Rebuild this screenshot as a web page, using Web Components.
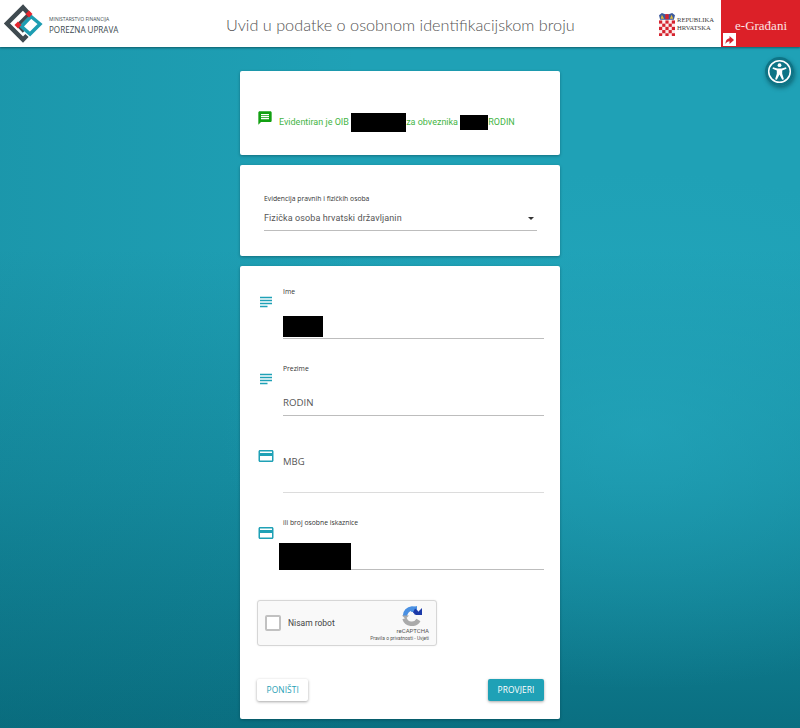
<!DOCTYPE html>
<html lang="hr">
<head>
<meta charset="utf-8">
<title>Uvid u podatke o osobnom identifikacijskom broju</title>
<style>
  html, body { margin: 0; padding: 0; }
  body {
    min-height: 728px;
    font-family: Roboto, "Liberation Sans", sans-serif;
    background:
      radial-gradient(ellipse 420px 260px at 640px 430px, rgba(38,170,192,.6), rgba(38,170,192,0) 100%),
      linear-gradient(90deg, rgba(6,90,105,.14), rgba(6,90,105,0) 45%),
      linear-gradient(180deg, #1fa1b6 0, #1fa1b6 250px, #168da1 480px, #0a6f81 728px);
  }
</style>
</head>
<body>
<app-header></app-header>
<a11y-button></a11y-button>
<main-column>
  <form-card variant="message">
    <status-line>Evidentiran je OIB <redact-box w="55" h="19"></redact-box>za obveznika <redact-box w="28" h="15"></redact-box>RODIN</status-line>
  </form-card>
  <form-card variant="select">
    <select-field label="Evidencija pravnih i fizičkih osoba">Fizička osoba hrvatski državljanin</select-field>
  </form-card>
  <form-card variant="form">
    <form-field label="Ime" icon="notes"><redact-box w="40" h="21" style="margin-bottom:-4px"></redact-box></form-field>
    <form-field label="Prezime" icon="notes">RODIN</form-field>
    <form-field label="MBG" icon="card" empty></form-field>
    <form-field label="ili broj osobne iskaznice" icon="card"><redact-box w="72" h="27" style="margin:0 0 -6px -4px"></redact-box></form-field>
    <recaptcha-box></recaptcha-box>
    <div slot="actions" style="display:flex;justify-content:space-between;margin:33px 0 0 1px">
      <app-button>PONIŠTI</app-button>
      <app-button primary>PROVJERI</app-button>
    </div>
  </form-card>
</main-column>

<script>
const ICONS = {
  notes: "M14 17H4v2h10v-2zm6-8H4v2h16V9zM4 15h16v-2H4v2zM4 5v2h16V5H4z",
  card: "M20 4H4c-1.11 0-1.99.89-1.99 2L2 18c0 1.11.89 2 2 2h16c1.11 0 2-.89 2-2V6c0-1.11-.89-2-2-2zm0 14H4v-6h16v6zm0-10H4V6h16v2z",
  message: "M20 2H4c-1.1 0-1.99.9-1.99 2L2 22l4-4h14c1.1 0 2-.9 2-2V4c0-1.1-.9-2-2-2zm-2 12H6v-2h12v2zm0-3H6V9h12v2zm0-3H6V6h12v2z"
};

class AppHeader extends HTMLElement {
  constructor() {
    super();
    this.attachShadow({ mode: "open" });
    // checkerboard of the coat of arms
    let squares = "";
    for (let r = 0; r < 5; r++) {
      for (let c = 0; c < 5; c++) {
        if ((r + c) % 2 === 0) squares += `<rect x="${c * 2.8}" y="${6.5 + r * 2.8}" width="2.8" height="2.8" fill="#d5232f"/>`;
      }
    }
    this.shadowRoot.innerHTML = `
      <style>
        :host {
          display: flex;
          height: 47px;
          background: #fff;
          box-shadow: 0 1px 2px rgba(0, 40, 50, .55);
          position: relative;
        }
        .brand { display: flex; align-items: center; width: 226px; flex: none; }
        .brand svg { flex: none; }
        .brand-text { display: flex; flex-direction: column; margin: 3px 0 0 1px; font-family: "Open Sans", sans-serif; color: #3c4a50; white-space: nowrap; }
        .ministry { font-size: 5px; line-height: 9px; }
        .office { font-size: 8.100px; line-height: 11px; }
        h1 {
          flex: 1;
          margin: 0;
          font: 300 16.250px/49px Lato, sans-serif;
          color: #555;
          white-space: nowrap;
        }
        .gov { display: flex; align-items: center; gap: 2px; width: 62px; flex: none; }
        .gov svg { margin-top: 1px; }
        .gov-text { font: 6.600px/8px "Liberation Serif", serif; color: #3a3a3a; }
        .citizen {
          position: relative;
          width: 79px;
          flex: none;
          background: #dc2028;
          color: #fbe3e3;
          font: 13px/51px "Liberation Serif", serif;
          text-align: right;
          padding-right: 13px;
          box-sizing: border-box;
        }
        .citizen svg { position: absolute; left: 2px; bottom: 1px; }
      </style>
      <div class="brand">
        <svg width="48" height="47" viewBox="0 0 48 47">
          <path d="M29 14 23 7.500 7 23.500 23 39.500 27 35.500" fill="none" stroke="#3f4a50" stroke-width="4.500"/>
          <path d="M29 14 18 25 24 31.500" fill="none" stroke="#3f4a50" stroke-width="3.500"/>
          <path d="M31 16.500 40 24 30 34 21.500 26.500z" fill="none" stroke="#1d9db2" stroke-width="3.500"/>
          <rect x="26.500" y="11.500" width="5" height="5" fill="#e5262f" transform="rotate(45 29 14)"/>
          <rect x="15.500" y="22.500" width="5" height="5" fill="#e5262f" transform="rotate(45 18 25)"/>
        </svg>
        <div class="brand-text"><span class="ministry">MINISTARSTVO FINANCIJA</span><span class="office">POREZNA UPRAVA</span></div>
      </div>
      <h1>Uvid u podatke o osobnom identifikacijskom broju</h1>
      <div class="gov">
        <svg width="16" height="23" viewBox="0 0 14 20.100" preserveAspectRatio="none">
          <path d="M0 2 2.500 0 5.500 1 8.500 1 11.500 0 14 2 13 6H1z" fill="#3d5a9e"/>
          <path d="M2.500 1.500 4.500 5H1.500zM11 1.500 12.500 5H9.500z" fill="#e0b93c"/>
          <path d="M5.500 1 8.500 1 8.500 5.500H5.500z" fill="#d5232f"/>
          <path d="M0 6.500H14V17C14 18.500 10.500 19.500 7 20.100 3.500 19.500 0 18.500 0 17z" fill="#fbecec"/>
          ${squares}
        </svg>
        <div class="gov-text">REPUBLIKA<br>HRVATSKA</div>
      </div>
      <div class="citizen">e-Građani
        <svg width="13" height="13" viewBox="0 0 13 13">
          <rect width="13" height="13" fill="#fff"/>
          <path d="M2.500 11C2.500 7 4.500 5.500 6.500 5.200V3L11 7 6.500 11V8.200C5 8.200 3.500 9 2.500 11z" fill="#d5232f"/>
        </svg>
      </div>
    `;
  }
}

class A11yButton extends HTMLElement {
  constructor() {
    super();
    this.attachShadow({ mode: "open" });
    this.shadowRoot.innerHTML = `
      <style>
        :host {
          position: absolute;
          left: 765px;
          top: 57px;
          width: 29px;
          height: 29px;
          border-radius: 50%;
          box-shadow: 1px 2px 4px rgba(0, 50, 60, .5);
        }
        svg { display: block; }
      </style>
      <svg width="29" height="29" viewBox="0 0 29 29">
        <circle cx="14.500" cy="14.500" r="14.500" fill="#0e7486"/>
        <circle cx="14.500" cy="14.500" r="10.800" fill="#0e7486" stroke="#fff" stroke-width="1.500"/>
        <circle cx="14.500" cy="8.200" r="1.900" fill="#fff"/>
        <path d="M8 10.300 12.300 11.600H16.700L21 10.300 21.500 11.800 17.200 13.600V16.800L18.900 22.200 17.200 22.800 14.500 17.600 11.800 22.800 10.100 22.200 11.800 16.800V13.600L7.500 11.800z" fill="#fff"/>
      </svg>
    `;
  }
}

class MainColumn extends HTMLElement {
  constructor() {
    super();
    this.attachShadow({ mode: "open" });
    this.shadowRoot.innerHTML = `
      <style>
        :host {
          display: flex;
          flex-direction: column;
          align-items: center;
          gap: 10px;
          padding: 24px 0 9px;
        }
      </style>
      <slot></slot>
    `;
  }
}

class FormCard extends HTMLElement {
  constructor() {
    super();
    this.attachShadow({ mode: "open" });
    this.shadowRoot.innerHTML = `
      <style>
        :host {
          display: block;
          box-sizing: border-box;
          width: 320px;
          background: #fff;
          border-radius: 2px;
          box-shadow: 0 1px 3px rgba(0, 40, 50, .4);
        }
        :host([variant="message"]) { height: 84px; padding: 39px 16px 0 17px; }
        :host([variant="select"]) { height: 91px; padding: 29px 23px 0 24px; }
        :host([variant="form"]) { height: 453px; padding: 19px 16px 18px; }
        .stack { display: flex; flex-direction: column; gap: 23px; }
      </style>
      <div class="stack"><slot></slot></div>
      <slot name="actions"></slot>
    `;
  }
}

class StatusLine extends HTMLElement {
  constructor() {
    super();
    this.attachShadow({ mode: "open" });
    this.shadowRoot.innerHTML = `
      <style>
        :host {
          display: flex;
          align-items: flex-start;
          gap: 6px;
          color: #45b545;
          font: 9px/19px Roboto, sans-serif;
          white-space: nowrap;
        }
        svg { flex: none; fill: #12a012; }
        .text { margin-top: 3px; }
      </style>
      <svg width="16" height="16" viewBox="0 0 24 24"><path d="${ICONS.message}"/></svg>
      <span class="text"><slot></slot></span>
    `;
  }
}

class RedactBox extends HTMLElement {
  constructor() {
    super();
    this.attachShadow({ mode: "open" });
    this.shadowRoot.innerHTML = `
      <style>
        :host {
          display: inline-block;
          vertical-align: middle;
          background: #000;
          width: ${this.getAttribute("w") || 40}px;
          height: ${this.getAttribute("h") || 20}px;
        }
      </style>
    `;
  }
}

class SelectField extends HTMLElement {
  constructor() {
    super();
    this.attachShadow({ mode: "open" });
    this.shadowRoot.innerHTML = `
      <style>
        :host { display: block; border-bottom: 1px solid #bdbdbd; height: 36px; color: #555; }
        .label { font: 6.800px/10px "Open Sans", sans-serif; color: #333; }
        .value { display: flex; justify-content: space-between; align-items: center; margin-top: 7px; font: 9px/14px Roboto, sans-serif; letter-spacing: .1px; }
        .caret { width: 0; height: 0; border: 3.500px solid transparent; border-top: 3.500px solid #333; border-bottom: 0; margin-right: 3px; }
      </style>
      <div class="label">${this.getAttribute("label")}</div>
      <div class="value"><span><slot></slot></span><span class="caret"></span></div>
    `;
  }
}

class FormField extends HTMLElement {
  constructor() {
    super();
    this.attachShadow({ mode: "open" });
    this.shadowRoot.innerHTML = `
      <style>
        :host { display: grid; grid-template-columns: 27px 1fr; height: 54px; color: #555; }
        svg { fill: #1fa1b6; margin: 8px 0 0 1px; }
        .body { display: flex; flex-direction: column; border-bottom: 1px solid #bdbdbd; }
        .label { font: 6.800px/12px "Open Sans", sans-serif; margin-top: 1px; color: #333; }
        :host([empty]) .label { font: 9.500px/12px "Open Sans", sans-serif; margin-top: 0; padding-top: 17px; color: #555; }
        :host([empty]) .body { border-bottom-color: #dcdcdc; }
        .value { display: flex; align-items: flex-end; margin-top: auto; padding-bottom: 5px; font: 9.700px/14px "Open Sans", sans-serif; }
      </style>
      <svg width="18" height="18" viewBox="0 0 24 24"><path d="${ICONS[this.getAttribute("icon")]}"/></svg>
      <div class="body">
        <div class="label">${this.getAttribute("label")}</div>
        <div class="value"><slot></slot></div>
      </div>
    `;
  }
}

class RecaptchaBox extends HTMLElement {
  constructor() {
    super();
    this.attachShadow({ mode: "open" });
    this.shadowRoot.innerHTML = `
      <style>
        :host {
          display: flex;
          align-items: center;
          box-sizing: border-box;
          width: 180px;
          height: 46px;
          margin: 7px 0 0 1px;
          padding: 0 7px;
          background: #f9f9f9;
          border: 1px solid #d6d6d6;
          border-radius: 3px;
          box-shadow: 0 0 2px rgba(0, 0, 0, .08);
          font-family: Roboto, sans-serif;
          color: #444;
        }
        .check { width: 16px; height: 16px; box-sizing: border-box; background: #fff; border: 2px solid #c1c1c1; border-radius: 2px; flex: none; }
        .label { margin-left: 7px; font-size: 8.500px; flex: 1; }
        .side { display: flex; flex-direction: column; align-items: flex-end; margin-top: 2px; }
        .side svg { margin: 0 7px 1px 0; }
        .name { font-size: 6px; line-height: 8px; color: #555; }
        .legal { font-size: 4.900px; line-height: 7px; color: #555; white-space: nowrap; }
      </style>
      <span class="check"></span>
      <span class="label">Nisam robot</span>
      <div class="side">
        <svg width="20" height="20" viewBox="0 0 20 20">
          <path d="M2.500 12.500A7.700 7.700 0 0 0 16.500 14" fill="none" stroke="#aaa" stroke-width="4.500"/>
          <path d="M3 10A7.500 7.500 0 0 1 10 2.500 7.500 7.500 0 0 1 13 3.100" fill="none" stroke="#4a90e2" stroke-width="4.500"/>
          <path d="M0 9.500H7L3.500 13z" fill="#aaa"/>
          <path d="M11 1 15 0V6L9 6z" fill="#4a90e2"/>
          <path d="M12 4.500A6 6 0 0 1 15 8" fill="none" stroke="#1c3aa9" stroke-width="4.500"/>
          <path d="M13 9H20V2z" fill="#1c3aa9"/>
        </svg>
        <span class="name">reCAPTCHA</span>
        <span class="legal">Pravila o privatnosti - Uvjeti</span>
      </div>
    `;
  }
}

class AppButton extends HTMLElement {
  constructor() {
    super();
    this.attachShadow({ mode: "open" });
    this.shadowRoot.innerHTML = `
      <style>
        :host {
          display: block;
          height: 22px;
          padding: 0 9.500px;
          background: #fff;
          color: #1fa1b6;
          font: 8.400px/22px "Open Sans", sans-serif;
          letter-spacing: .1px;
          border-radius: 2px;
          box-shadow: 0 1px 3px rgba(0, 0, 0, .35);
        }
        :host([primary]) { background: #1fa1b6; color: #fff; }
      </style>
      <slot></slot>
    `;
  }
}

customElements.define("app-header", AppHeader);
customElements.define("a11y-button", A11yButton);
customElements.define("main-column", MainColumn);
customElements.define("form-card", FormCard);
customElements.define("status-line", StatusLine);
customElements.define("redact-box", RedactBox);
customElements.define("select-field", SelectField);
customElements.define("form-field", FormField);
customElements.define("recaptcha-box", RecaptchaBox);
customElements.define("app-button", AppButton);
</script>
</body>
</html>
